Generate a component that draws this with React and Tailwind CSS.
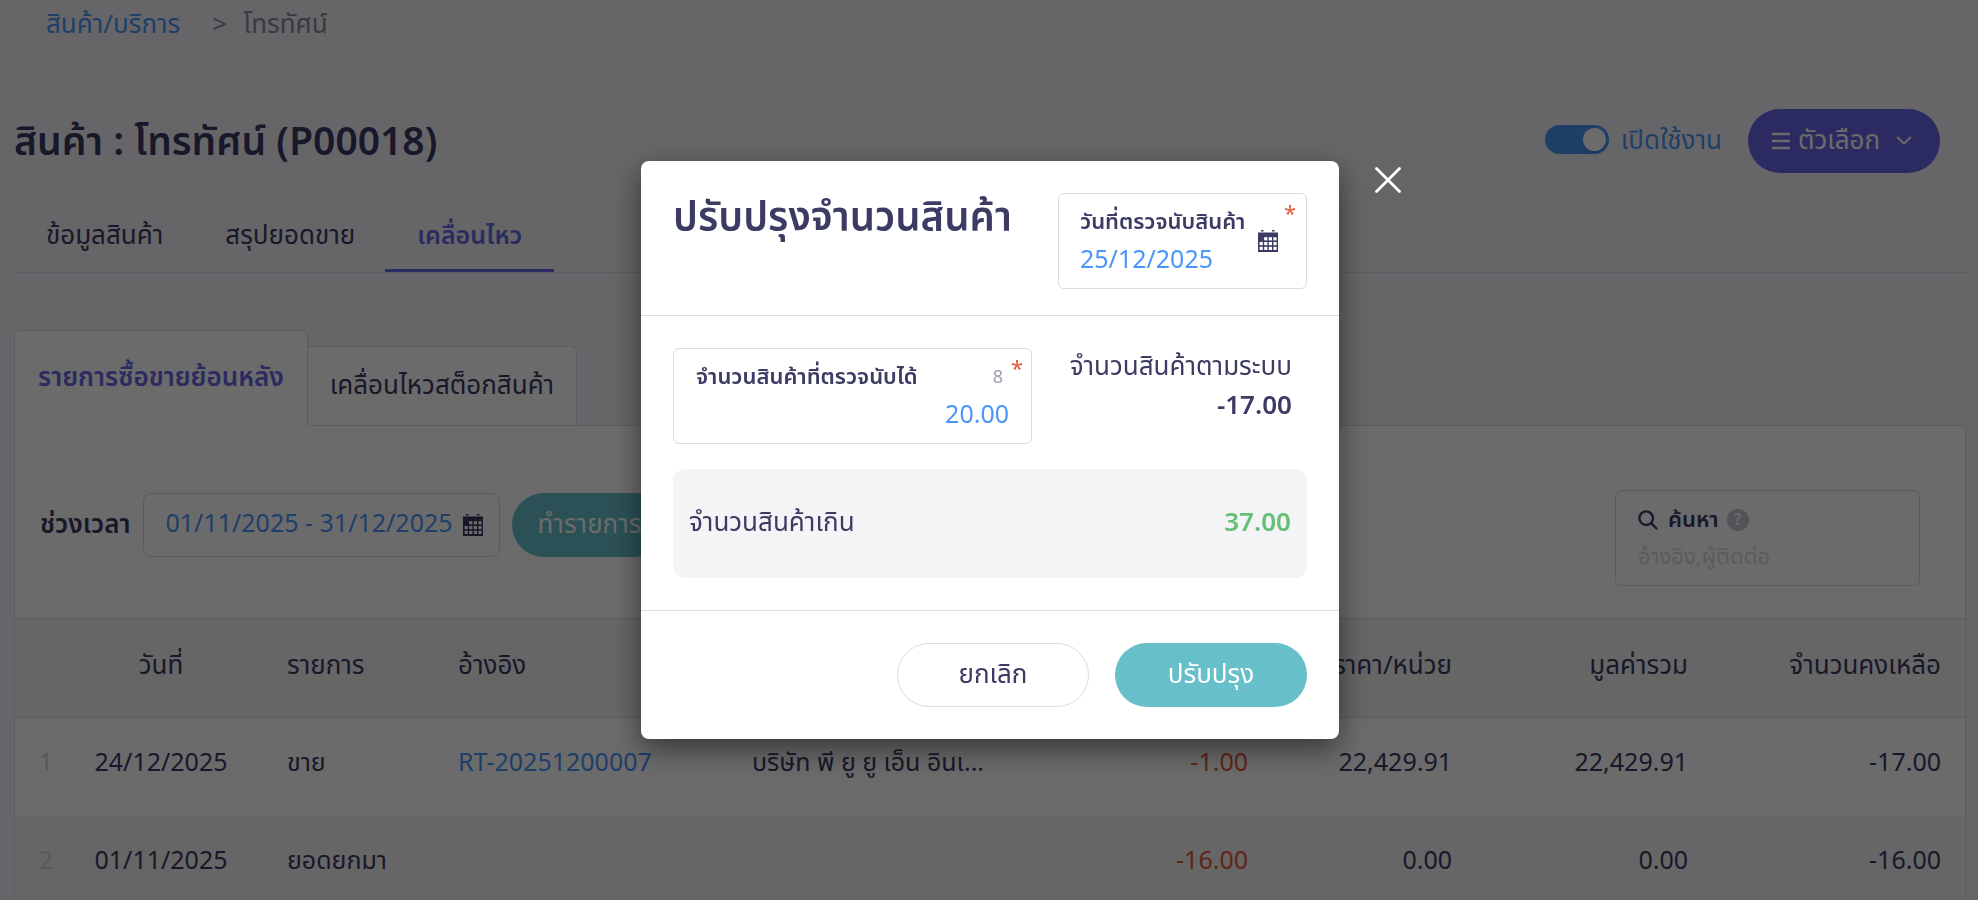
import React, { useState } from "react";

const LINE = "border-[#dadae8]";

function CalendarIcon() {
  return (
    <svg viewBox="0 0 20 22" className="h-[22px] w-5 shrink-0 text-[#3b3b64]" aria-hidden="true">
      <path fill="currentColor" d="M0 2.5h20V22H0z M3 0h2.5v1.6H3z M14 0h2.5v1.6h-2.5z" />
      <g fill="#fff">
        {[6.2, 10.8, 15.4].map((x) => (
          <rect key={x} x={x} y="7.2" width="3.2" height="3.2" />
        ))}
        {[1.6, 6.2, 10.8, 15.4].map((x) => (
          <rect key={x} x={x} y="12" width="3.2" height="3.2" />
        ))}
        {[1.6, 6.2, 10.8, 15.4].map((x) => (
          <rect key={x} x={x} y="16.8" width="3.2" height="3.2" />
        ))}
      </g>
    </svg>
  );
}

const rows = [
  { n: 1, date: "24/12/2025", type: "ขาย", ref: "RT-20251200007", who: "บริษัท พี ยู ยู เอ็น อินเ...", qty: "-1.00", price: "22,429.91", total: "22,429.91", left: "-17.00" },
  { n: 2, date: "01/11/2025", type: "ยอดยกมา", ref: "", who: "", qty: "-16.00", price: "0.00", total: "0.00", left: "-16.00" },
];

function Page() {
  const [on, setOn] = useState(true);
  return (
    <div className="pl-[14px] pr-3">
      <nav className="flex h-[50px] items-center px-8">
        <a href="#products" className="text-[#4a96fa]">สินค้า/บริการ</a>
        <span className="ml-8 text-[#8a889c]">&gt;</span>
        <span className="ml-4 text-[#8a889c]">โทรทัศน์</span>
      </nav>

      <header className="mt-[59px] flex h-16 items-center justify-between pr-[26px]">
        <h1 className="pt-1 text-[39px] font-semibold leading-none">สินค้า : โทรทัศน์ (P00018)</h1>
        <div className="flex items-center">
          <label className="flex cursor-pointer items-center gap-3 text-[#4a96fa]">
            <input
              type="checkbox"
              checked={on}
              onChange={() => setOn(!on)}
              className="mb-1 h-[29px] w-16 appearance-none rounded-full bg-[#4a96fa] p-[3px] before:ml-auto before:block before:size-[23px] before:rounded-full before:bg-white before:shadow-md before:content-['']"
            />
            เปิดใช้งาน
          </label>
          <button type="button" className="ml-[26px] flex h-16 items-center rounded-full bg-[#6967e6] px-6 text-white">
            <svg viewBox="0 0 18 18" className="mr-2 h-[18px] w-[18px]" fill="none" stroke="currentColor" strokeWidth="2.5" aria-hidden="true">
              <path d="M0 2h18M0 9h18M0 16h18" />
            </svg>
            ตัวเลือก
            <svg viewBox="0 0 18 10" className="ml-4 mr-1 h-[10px] w-4" fill="none" stroke="currentColor" strokeWidth="2.2" strokeLinecap="round" strokeLinejoin="round" aria-hidden="true">
              <path d="M2 1l7 7 7-7" />
            </svg>
          </button>
        </div>
      </header>

      <nav className={`mt-6 flex h-[76px] border-b ${LINE}`}>
        <a href="#info" className="flex items-center px-8 pt-1">ข้อมูลสินค้า</a>
        <a href="#summary" className="flex items-center px-[30px] pt-1">สรุปยอดขาย</a>
        <a href="#movement" className="flex items-center border-b-[3px] border-[#6967e6] px-8 pt-2 text-[25px] font-semibold text-[#6967e6]">เคลื่อนไหว</a>
      </nav>

      <div className="relative z-10 mt-[57px] flex items-end">
        <button type="button" className={`-mb-px flex h-24 items-center rounded-t-md border border-b-0 bg-white px-[23px] font-semibold text-[#6967e6] ${LINE}`}>รายการซื้อขายย้อนหลัง</button>
        <button type="button" className={`flex h-[79px] items-center rounded-tr-md border border-b-0 border-l-0 bg-white px-[22px] ${LINE}`}>เคลื่อนไหวสต็อกสินค้า</button>
      </div>

      <section className={`rounded-tr-lg border bg-white ${LINE}`}>
        <div className="flex items-start justify-between pt-16 pr-[45px] pb-8 pl-[25px]">
          <div className="mt-[3px] flex items-center">
            <label htmlFor="range" className="font-semibold">ช่วงเวลา</label>
            <div className={`ml-3 flex h-16 w-[357px] items-center rounded-lg border pl-[22px] pr-4 ${LINE}`}>
              <input id="range" defaultValue="01/11/2025 - 31/12/2025" className="min-w-0 flex-1 bg-transparent text-[25px] text-[#4a96fa] outline-none" />
              <CalendarIcon />
            </div>
            <button type="button" className="ml-3 h-16 rounded-full bg-[#67bfca] px-[26px] text-white">ทำรายการ</button>
          </div>
          <div className={`h-24 w-[305px] rounded-md border px-[22px] pt-3 ${LINE}`}>
            <div className="flex h-[34px] items-center text-[22px] font-semibold">
              <svg viewBox="0 0 20 20" className="mr-[10px] size-5" fill="none" stroke="currentColor" strokeWidth="2.4" strokeLinecap="round" aria-hidden="true">
                <circle cx="8.2" cy="8.2" r="6.8" />
                <path d="M13.2 13.2l5.3 5.3" />
              </svg>
              <label htmlFor="search">ค้นหา</label>
              <span className="ml-2 flex size-[22px] items-center justify-center rounded-full bg-[#c5c5d3] text-base text-white">?</span>
            </div>
            <input id="search" placeholder="อ้างอิง,ผู้ติดต่อ" className="h-10 w-full bg-transparent text-[22px] outline-none placeholder:text-[#d8d8e0]" />
          </div>
        </div>

        <table className="w-full table-fixed border-collapse">
          <colgroup>
            <col className="w-[62px]" />
            <col className="w-[168px]" />
            <col className="w-[171px]" />
            <col className="w-[294px]" />
            <col className="w-[300px]" />
            <col />
            <col className="w-[204px]" />
            <col className="w-[236px]" />
            <col className="w-[277px]" />
          </colgroup>
          <thead>
            <tr className={`h-[99px] border-y bg-[#f3f3f3] ${LINE}`}>
              <th></th>
              <th className="pb-1 text-center font-normal">วันที่</th>
              <th className="pb-1 pl-[42px] text-left font-normal">รายการ</th>
              <th className="pb-1 pl-[42px] text-left font-normal">อ้างอิง</th>
              <th aria-label="ผู้ติดต่อ"></th>
              <th aria-label="จำนวน"></th>
              <th className="pb-1 text-right font-normal">ราคา/หน่วย</th>
              <th className="pb-1 text-right font-normal">มูลค่ารวม</th>
              <th className="pr-6 pb-1 text-right font-normal">จำนวนคงเหลือ</th>
            </tr>
          </thead>
          <tbody>
            {rows.map((r) => (
              <tr key={r.n} className="h-[99px] text-[25px] even:bg-[#f3f3f3]">
                <td className="pb-2 text-center text-[#d3d3da]">{r.n}</td>
                <td className="pb-2 text-center">{r.date}</td>
                <td className="pb-2 pl-[42px]">{r.type}</td>
                <td className="pb-2 pl-[42px]"><a href="#ref" className="text-[#4a96fa]">{r.ref}</a></td>
                <td className="pb-2 pl-[42px] whitespace-nowrap">{r.who}</td>
                <td className="pb-2 text-right text-[#e4593c]">{r.qty}</td>
                <td className="pb-2 text-right">{r.price}</td>
                <td className="pb-2 text-right">{r.total}</td>
                <td className="pr-6 pb-2 text-right">{r.left}</td>
              </tr>
            ))}
          </tbody>
        </table>
      </section>
    </div>
  );
}

function AdjustDialog() {
  return (
    <div className="fixed inset-0 z-20 flex items-center justify-center bg-black/58 pl-0.5">
      <div role="dialog" aria-modal="true" aria-labelledby="dialog-title" className="relative w-[698px] rounded-lg bg-white shadow-[0_10px_30px_rgba(0,0,0,0.5)]">
        <header className={`flex items-start justify-between border-b px-8 pt-8 pb-[26px] ${LINE}`}>
          <h2 id="dialog-title" className="text-[40px] font-semibold leading-[52px]">ปรับปรุงจำนวนสินค้า</h2>
          <div className={`relative flex h-24 w-[249px] items-center rounded-md border pl-[21px] pr-7 ${LINE}`}>
            <div className="min-w-0 flex-1 pt-1">
              <label htmlFor="count-date" className="block whitespace-nowrap text-[22px] font-semibold leading-[34px]">วันที่ตรวจนับสินค้า</label>
              <input id="count-date" defaultValue="25/12/2025" className="h-10 w-full bg-transparent text-[25px] text-[#4a96fa] outline-none" />
            </div>
            <CalendarIcon />
            <span className="absolute right-[10px] top-1 text-[22px] text-[#e4593c]">*</span>
          </div>
        </header>

        <div className="px-8 py-8">
          <div className="flex justify-between">
            <div className={`relative h-24 w-[359px] rounded-md border px-[22px] pt-3 ${LINE}`}>
              <div className="flex items-center justify-between leading-[34px]">
                <label htmlFor="counted" className="text-[22px] font-semibold">จำนวนสินค้าที่ตรวจนับได้</label>
                <span className="mr-1.5 text-lg leading-[34px] text-[#9d9cb2]">8</span>
              </div>
              <input id="counted" defaultValue="20.00" className="h-10 w-full bg-transparent text-right text-[25px] text-[#4a96fa] outline-none" />
              <span className="absolute right-2 top-1 text-[22px] text-[#e4593c]">*</span>
            </div>
            <div className="pr-[15px] text-right leading-[38px]">
              <p>จำนวนสินค้าตามระบบ</p>
              <p className="font-semibold leading-[40px]">-17.00</p>
            </div>
          </div>
          <div className="mt-[25px] flex h-[109px] items-center justify-between rounded-xl bg-[#f4f4f7] px-4">
            <span>จำนวนสินค้าเกิน</span>
            <strong className="font-semibold text-[#66bf77]">37.00</strong>
          </div>
        </div>

        <footer className={`flex justify-end gap-[26px] border-t p-8 ${LINE}`}>
          <button type="button" className={`h-16 w-48 rounded-full border ${LINE}`}>ยกเลิก</button>
          <button type="button" className="h-16 w-48 rounded-full bg-[#67bfca] text-white">ปรับปรุง</button>
        </footer>

        <button type="button" aria-label="ปิด" className="absolute -right-[62px] top-[6px] text-white">
          <svg viewBox="0 0 26 26" className="size-[26px]" fill="none" stroke="currentColor" strokeWidth="2.8" strokeLinecap="round" aria-hidden="true">
            <path d="M1.5 1.5l23 23M24.5 1.5l-23 23" />
          </svg>
        </button>
      </div>
    </div>
  );
}

export default function App() {
  return (
    <div className="h-screen overflow-hidden bg-[#f3f3f7] font-['Noto_Sans_Thai','Noto_Sans',sans-serif] text-[26px] text-[#3b3b64]">
      <Page />
      <AdjustDialog />
    </div>
  );
}
